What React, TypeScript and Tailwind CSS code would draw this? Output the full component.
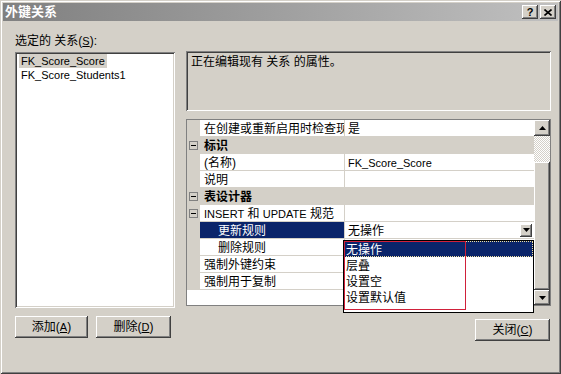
import React from 'react';

const raised =
  'shadow-[inset_-1px_-1px_0_#404040,inset_1px_1px_0_#ffffff,inset_-2px_-2px_0_#808080,inset_2px_2px_0_#d4d0c8]';
const sunken =
  'shadow-[inset_1px_1px_0_#808080,inset_-1px_-1px_0_#ffffff,inset_2px_2px_0_#404040,inset_-2px_-2px_0_#d4d0c8]';

const Arrow = ({ up = false }: { up?: boolean }) => (
  <svg width="7" height="4" viewBox="0 0 7 4">
    <polygon points={up ? '3.5,0 7,4 0,4' : '0,0 7,0 3.5,4'} fill="#000" />
  </svg>
);

const Minus = () => (
  <div className="w-[9px] h-[9px] border border-[#808080] flex items-center justify-center">
    <div className="w-[5px] h-[1px] bg-black" />
  </div>
);

interface Row {
  name: string;
  value?: string;
  category?: boolean;
  expander?: boolean;
  indent?: boolean;
  selected?: boolean;
  latin?: boolean;
  combo?: boolean;
}

const rows: Row[] = [
  { name: '在创建或重新启用时检查现有数据', value: '是' },
  { name: '标识', category: true },
  { name: '(名称)', value: 'FK_Score_Score', latin: true },
  { name: '说明', value: '' },
  { name: '表设计器', category: true },
  { name: 'INSERT 和 UPDATE 规范', expander: true, value: '' },
  { name: '更新规则', indent: true, selected: true, value: '无操作', combo: true },
  { name: '删除规则', indent: true, value: '' },
  { name: '强制外键约束', value: '' },
  { name: '强制用于复制', value: '' },
];

const GridRow = ({ row }: { row: Row }) => {
  if (row.category) {
    return (
      <div className="flex h-[17px] bg-[#d4d0c8] items-center">
        <div className="w-[13px] flex justify-center">
          <Minus />
        </div>
        <span className="pl-[4px] pt-[2px] font-bold text-[12px] leading-[15px]">{row.name}</span>
      </div>
    );
  }
  return (
    <div className="flex h-[17px]">
      <div className="w-[13px] bg-[#d4d0c8] flex items-center justify-center">
        {row.expander && <Minus />}
      </div>
      <div
        className={`w-[145px] border-r border-b border-[#d4d0c8] overflow-hidden whitespace-nowrap pt-[2px] leading-[14px] text-[12px] ${
          row.indent ? 'pl-[18px]' : 'pl-[4px]'
        } ${row.selected ? 'bg-[#0a246a] text-white' : 'bg-white'}`}
      >
        {row.name.startsWith('INSERT') ? (
          <>
            <span className="text-[11px]">INSERT</span> 和 <span className="text-[11px]">UPDATE</span> 规范
          </>
        ) : (
          row.name
        )}
      </div>
      <div className="flex-1 bg-white border-b border-[#d4d0c8] flex items-center pl-[3px] pr-[2px]">
        <span className={`flex-1 pt-[2px] leading-[14px] ${row.latin ? 'text-[11px]' : 'text-[12px]'}`}>
          {row.value}
        </span>
        {row.combo && (
          <div className={`w-[12px] h-[13px] bg-[#d4d0c8] flex items-center justify-center ${raised}`}>
            <Arrow />
          </div>
        )}
      </div>
    </div>
  );
};

const Btn = ({ label, k, w }: { label: string; k: string; w: string }) => (
  <div className={`${w} h-[22px] bg-[#d4d0c8] flex items-center justify-center text-[12px] ${raised}`}>
    {label}(<span className="underline text-[11px]">{k}</span>)
  </div>
);

export default function App() {
  return (
    <div
      className={`w-[561px] h-[374px] bg-[#d4d0c8] p-[3px] text-black font-['Liberation_Sans','Noto_Sans_CJK_SC',sans-serif] shadow-[inset_1px_1px_0_#d4d0c8,inset_-1px_-1px_0_#404040,inset_2px_2px_0_#ffffff,inset_-2px_-2px_0_#808080]`}
    >
      {/* title bar */}
      <div className="h-[18px] flex items-center pl-[2px] pr-[2px] bg-gradient-to-r from-[#808080] to-[#c0c0c0]">
        <span className="flex-1 text-white font-bold text-[13px] leading-[18px]">外键关系</span>
        <div className={`w-[16px] h-[14px] bg-[#d4d0c8] flex items-center justify-center text-[11px] font-bold leading-none ${raised}`}>
          ?
        </div>
        <div className={`ml-[2px] w-[16px] h-[14px] bg-[#d4d0c8] flex items-center justify-center ${raised}`}>
          <svg width="8" height="7" viewBox="0 0 8 7">
            <path d="M0.5 0.5 L7.5 6.5 M7.5 0.5 L0.5 6.5" stroke="#000" strokeWidth="1.6" />
          </svg>
        </div>
      </div>

      <div className="flex pl-[12px]">
        {/* left column */}
        <div className="w-[160px] flex flex-col">
          <div className="mt-[12px] h-[16px] leading-[16px] text-[12px]">
            选定的 关系(<span className="underline text-[11px]">S</span>):
          </div>
          <div className={`mt-[3px] h-[256px] bg-white p-[2px] pl-[4px] ${sunken}`}>
            <div className="h-[14px] leading-[14px] text-[11px]">
              <span className="inline-block bg-[#d4d0c8] px-[2px]">FK_Score_Score</span>
            </div>
            <div className="h-[14px] leading-[14px] text-[11px] px-[2px]">FK_Score_Students1</div>
          </div>
          <div className="mt-[8px] flex gap-[8px]">
            <Btn label="添加" k="A" w="w-[73px]" />
            <Btn label="删除" k="D" w="w-[75px]" />
          </div>
        </div>

        {/* right column */}
        <div className="ml-[11px] w-[365px] flex flex-col">
          <div className={`mt-[30px] h-[60px] bg-[#d4d0c8] pt-[4px] pl-[5px] text-[12px] leading-[14px] ${sunken}`}>
            正在编辑现有 关系 的属性。
          </div>

          <div className="relative mt-[8px] h-[187px] border border-[#808080] flex">
            <div className="flex-1 bg-white flex flex-col">
              {rows.map((r, i) => (
                <GridRow key={i} row={r} />
              ))}
            </div>
            <div className="w-[16px] flex flex-col">
              <div className={`h-[16px] bg-[#d4d0c8] flex items-center justify-center ${raised}`}>
                <Arrow up />
              </div>
              <div className="h-[26px] bg-[repeating-conic-gradient(#ffffff_0%_25%,#d4d0c8_0%_50%)] bg-[length:2px_2px]" />
              <div className={`h-[128px] bg-[#d4d0c8] ${raised}`} />
              <div className={`h-[15px] bg-[#d4d0c8] flex items-center justify-center ${raised}`}>
                <Arrow />
              </div>
            </div>

            {/* open dropdown list */}
            <div className="absolute left-[156px] top-[120px] w-[191px] h-[73px] bg-white border border-black text-[12px]">
              <div className="h-[16px] pt-[2px] leading-[14px] bg-[#0a246a] text-white pl-[2px] outline-1 outline-dotted outline-[#f0e0a0] -outline-offset-1">
                无操作
              </div>
              <div className="h-[16px] pt-[2px] leading-[14px] pl-[2px]">层叠</div>
              <div className="h-[16px] pt-[2px] leading-[14px] pl-[2px]">设置空</div>
              <div className="h-[16px] pt-[2px] leading-[14px] pl-[2px]">设置默认值</div>
            </div>
            <div className="absolute left-[157px] top-[121px] w-[122px] h-[69px] border border-[#d0203a]" />
          </div>

          <div className="mt-[13px] self-end mr-[1px]">
            <Btn label="关闭" k="C" w="w-[75px]" />
          </div>
        </div>
      </div>
    </div>
  );
}
